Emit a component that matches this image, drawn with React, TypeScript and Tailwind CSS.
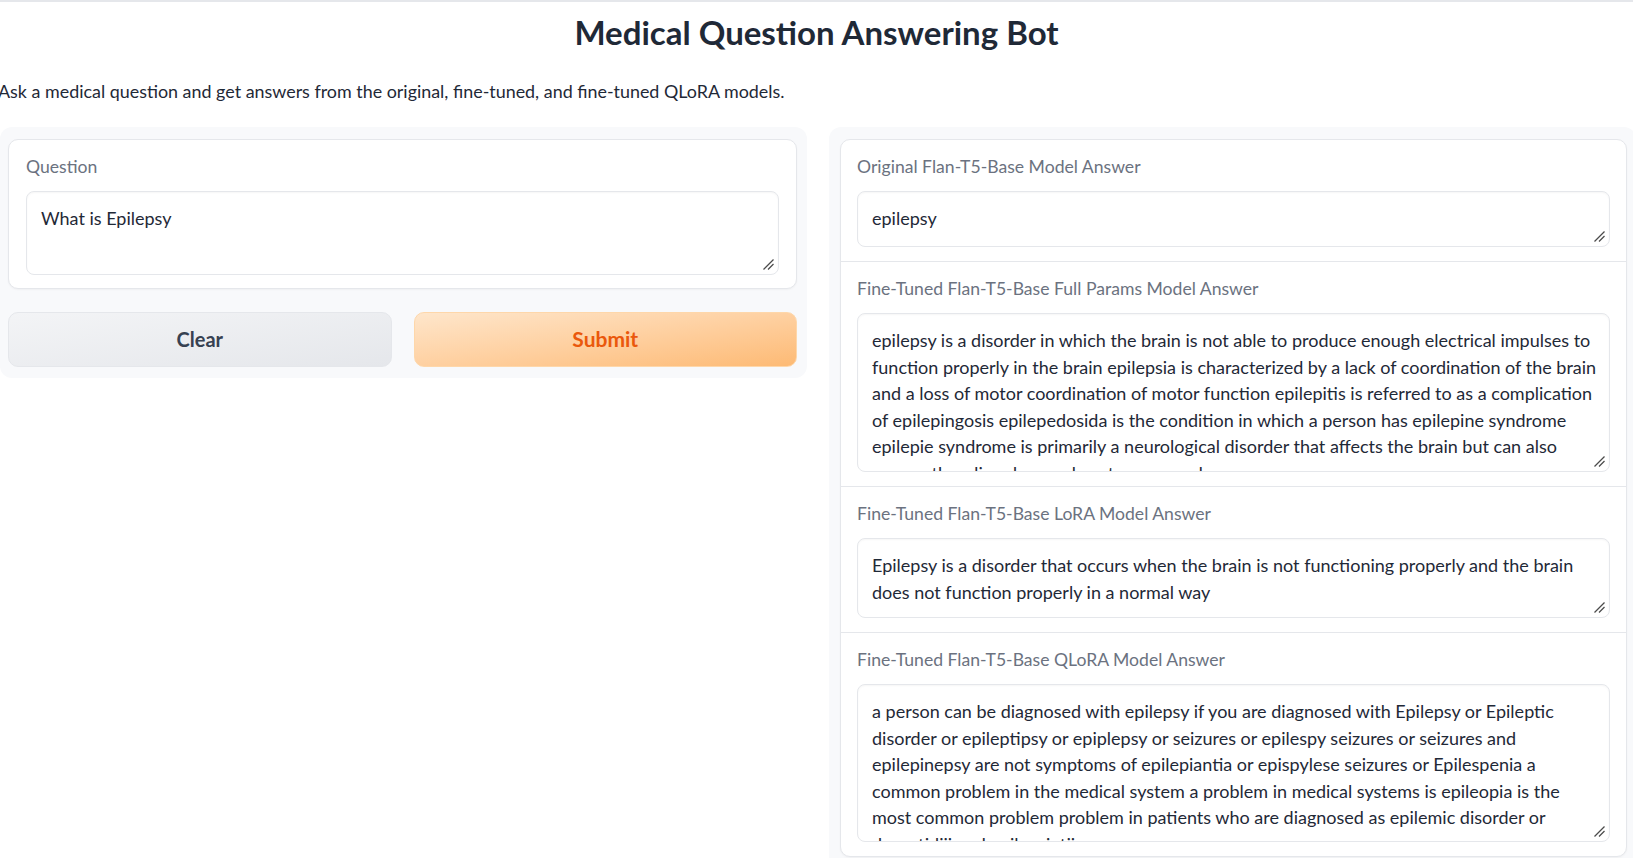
import React from "react";

const fullParams = [
  "epilepsy is a disorder in which the brain is not able to produce enough electrical impulses to",
  "function properly in the brain epilepsia is characterized by a lack of coordination of the brain",
  "and a loss of motor coordination of motor function epilepitis is referred to as a complication",
  "of epilepingosis epilepedosida is the condition in which a person has epilepine syndrome",
  "epilepie syndrome is primarily a neurological disorder that affects the brain but can also",
  "cause other disorders such as tremors and",
];

const lora = [
  "Epilepsy is a disorder that occurs when the brain is not functioning properly and the brain",
  "does not function properly in a normal way",
];

const qlora = [
  "a person can be diagnosed with epilepsy if you are diagnosed with Epilepsy or Epileptic",
  "disorder or epileptipsy or epiplepsy or seizures or epilespy seizures or seizures and",
  "epilepinepsy are not symptoms of epilepiantia or epispylese seizures or Epilespenia a",
  "common problem in the medical system a problem in medical systems is epileopia is the",
  "most common problem problem in patients who are diagnosed as epilemic disorder or",
  "dysautidiii and epilepsietii",
];

function ResizeHandle() {
  return (
    <svg
      className="absolute bottom-[4px] right-[4px]"
      width="11"
      height="11"
      viewBox="0 0 11 11"
    >
      <line x1="10.5" y1="0.5" x2="0.5" y2="10.5" stroke="#4b4b4b" strokeWidth="1.3" />
      <line x1="10.5" y1="5" x2="5" y2="10.5" stroke="#4b4b4b" strokeWidth="1.3" />
    </svg>
  );
}

function TextBox({ lines, height }: { lines: string[]; height: string }) {
  return (
    <div
      className={`relative overflow-hidden rounded-[8px] border border-[#e5e7eb] bg-white shadow-[inset_0_1px_2px_rgba(0,0,0,0.04)] ${height}`}
    >
      <div className="h-full overflow-hidden px-[14px] pt-[13px] text-[18px] leading-[26.5px] text-[#1f2937]">
        {lines.map((l, i) => (
          <div key={i} className="whitespace-nowrap">
            {l}
          </div>
        ))}
      </div>
      <ResizeHandle />
    </div>
  );
}

function Answer({
  label,
  lines,
  height,
  first,
}: {
  label: string;
  lines: string[];
  height: string;
  first?: boolean;
}) {
  return (
    <div
      className={`flex flex-col gap-[13px] px-[16px] pb-[14px] pt-[16px] ${
        first ? "" : "border-t border-[#e5e7eb]"
      }`}
    >
      <div className="text-[17.6px] leading-[22px] text-[#6b7280]">{label}</div>
      <TextBox lines={lines} height={height} />
    </div>
  );
}

export default function App() {
  return (
    <div className="h-[858px] overflow-hidden border-t-2 border-[#e5e7eb] bg-white font-['Lato',sans-serif]">
      <h1 className="mt-[10px] text-center text-[33px] font-bold leading-[40px] text-[#1f2937]">
        Medical Question Answering Bot
      </h1>
      <p className="ml-[-2px] mt-[27px] text-[17.9px] leading-[24px] text-[#1f2937]">
        Ask a medical question and get answers from the original, fine-tuned, and fine-tuned QLoRA models.
      </p>

      <div className="mt-[24px] flex w-[1658px] items-start gap-[22px]">
        {/* left column */}
        <div className="w-[807px] shrink-0 rounded-[12px] bg-[#f8f9fb] pb-[11px] pl-[8px] pr-[10px] pt-[12px]">
          <div className="flex flex-col gap-[13px] rounded-[10px] border border-[#e5e7eb] bg-white px-[17px] pb-[13px] pt-[16px] shadow-[0_1px_2px_rgba(0,0,0,0.04)]">
            <div className="text-[17.6px] leading-[22px] text-[#6b7280]">Question</div>
            <TextBox lines={["What is Epilepsy"]} height="h-[84px]" />
          </div>
          <div className="mt-[23px] flex gap-[22px]">
            <button className="h-[55px] flex-1 rounded-[10px] border border-[#e5e7eb] bg-gradient-to-br from-[#f3f4f6] to-[#e5e7eb] pb-[1px] text-[20px] font-bold text-[#374151]">
              Clear
            </button>
            <button className="h-[55px] flex-1 rounded-[10px] border border-[#fed7aa] bg-gradient-to-br from-[#fee6cb] to-[#fdba74] pb-[1px] text-[21px] font-bold text-[#ea580c]">
              Submit
            </button>
          </div>
        </div>

        {/* right column */}
        <div className="h-[760px] w-[807px] shrink-0 rounded-[12px] bg-[#f8f9fb] pl-[11px] pr-[9px] pt-[12px]">
          <div className="rounded-[10px] border border-[#e5e7eb] bg-white shadow-[0_1px_2px_rgba(0,0,0,0.04)]">
            <Answer
              first
              label="Original Flan-T5-Base Model Answer"
              lines={["epilepsy"]}
              height="h-[56px]"
            />
            <Answer
              label="Fine-Tuned Flan-T5-Base Full Params Model Answer"
              lines={fullParams}
              height="h-[159px]"
            />
            <Answer
              label="Fine-Tuned Flan-T5-Base LoRA Model Answer"
              lines={lora}
              height="h-[80px]"
            />
            <Answer
              label="Fine-Tuned Flan-T5-Base QLoRA Model Answer"
              lines={qlora}
              height="h-[158px]"
            />
          </div>
        </div>
      </div>
    </div>
  );
}
